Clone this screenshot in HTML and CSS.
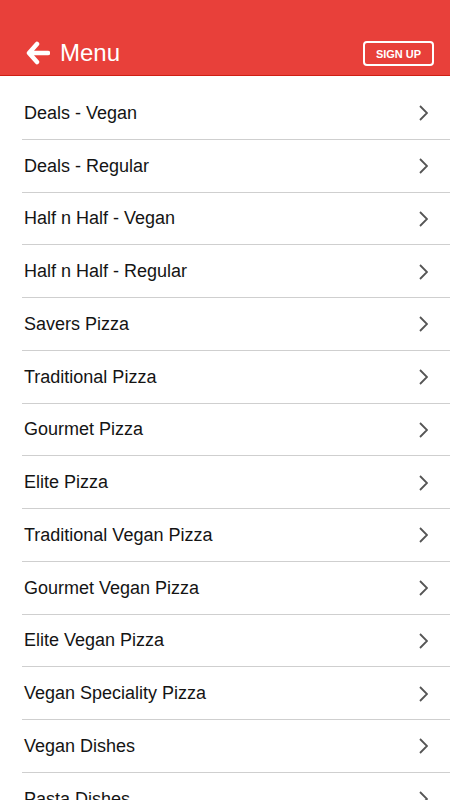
FILE: index.html
```html
<!DOCTYPE html>
<html lang="en">
<head>
  <meta charset="UTF-8" />
  <meta name="viewport" content="width=device-width, initial-scale=1.0"/>
  <title>Menu</title>
  <link rel="stylesheet" href="styles.css">
</head>
<body>
  <div class="header">
    <div class="title">
      <svg class="back" width="24" height="24" viewBox="0 0 24 24">
        <path d="M11 3 L3 12 L11 21 M4 12 H22" fill="none" stroke="#fff" stroke-width="4.5" stroke-linecap="round" stroke-linejoin="round"/>
      </svg>
      <span>Menu</span>
    </div>
    <button class="signup-btn">SIGN UP</button>
  </div>

  <ul class="menu-list">
    <li>Deals - Vegan</li>
    <li>Deals - Regular</li>
    <li>Half n Half - Vegan</li>
    <li>Half n Half - Regular</li>
    <li>Savers Pizza</li>
    <li>Traditional Pizza</li>
    <li>Gourmet Pizza</li>
    <li>Elite Pizza</li>
    <li>Traditional Vegan Pizza</li>
    <li>Gourmet Vegan Pizza</li>
    <li>Elite Vegan Pizza</li>
    <li>Vegan Speciality Pizza</li>
    <li>Vegan Dishes</li>
    <li>Pasta Dishes</li>
  </ul>
</body>
</html>
```

FILE: styles.css
```css
body { margin: 0; font-family: "Liberation Sans", Arial, sans-serif; background: white; overflow: hidden; }

.header {
  height: 76px;
  background: #e8403a;
  border-bottom: 1px solid #cf1f14;
  display: flex;
  align-items: flex-end;
  justify-content: space-between;
  padding: 0 16px 9px 26px;
  box-sizing: border-box;
}
.title { display: flex; align-items: center; gap: 10px; color: white; font-size: 24px; margin-bottom: -1px; }
.back { display: block; }
.signup-btn {
  width: 71px;
  height: 25px;
  padding: 0;
  background: transparent;
  color: white;
  border: 2px solid white;
  border-radius: 4px;
  font-family: "Liberation Sans", Arial, sans-serif;
  font-size: 11px;
  font-weight: bold;
}

.menu-list { list-style: none; margin: 0; padding: 11px 0 0 22px; }
.menu-list li {
  height: 52.75px;
  box-sizing: border-box;
  border-bottom: 1px solid #cfcfcf;
  display: flex;
  align-items: center;
  justify-content: space-between;
  padding: 1px 22px 0 2px;
  font-size: 18px;
  color: #141414;
}
.menu-list li::after {
  content: "";
  width: 9px;
  height: 16px;
  background: url("data:image/svg+xml;utf8,<svg xmlns='http://www.w3.org/2000/svg' width='9' height='16' viewBox='0 0 9 16'><polyline points='1,1 8,8 1,15' fill='none' stroke='%23555' stroke-width='1.8'/></svg>") no-repeat;
}
```
